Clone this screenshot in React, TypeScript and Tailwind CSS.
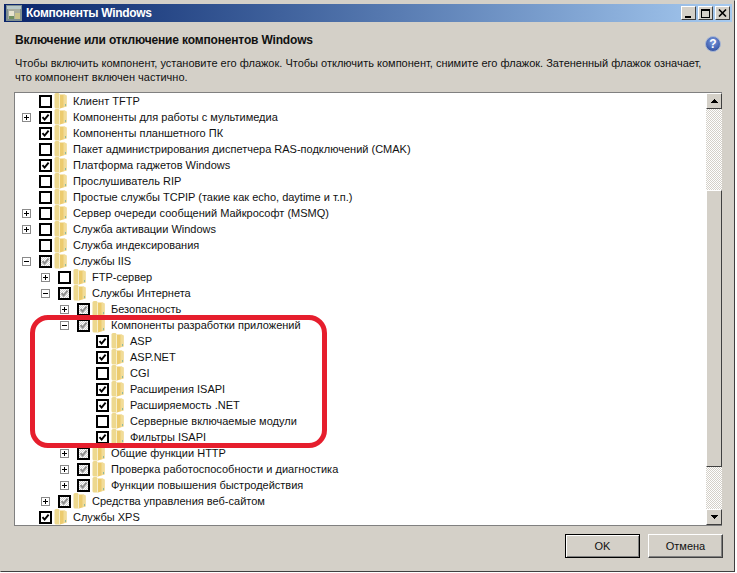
import React from "react";

type Row = {
  label: string;
  level: number;
  expander?: "plus" | "minus";
  state: "off" | "on" | "partial";
};

const rows: Row[] = [
  { label: "Клиент TFTP", level: 0, state: "off" },
  { label: "Компоненты для работы с мультимедиа", level: 0, expander: "plus", state: "on" },
  { label: "Компоненты планшетного ПК", level: 0, state: "on" },
  { label: "Пакет администрирования диспетчера RAS-подключений (CMAK)", level: 0, state: "off" },
  { label: "Платформа гаджетов Windows", level: 0, state: "on" },
  { label: "Прослушиватель RIP", level: 0, state: "off" },
  { label: "Простые службы TCPIP (такие как echo, daytime и т.п.)", level: 0, state: "off" },
  { label: "Сервер очереди сообщений Майкрософт (MSMQ)", level: 0, expander: "plus", state: "off" },
  { label: "Служба активации Windows", level: 0, expander: "plus", state: "off" },
  { label: "Служба индексирования", level: 0, state: "off" },
  { label: "Службы IIS", level: 0, expander: "minus", state: "partial" },
  { label: "FTP-сервер", level: 1, expander: "plus", state: "off" },
  { label: "Службы Интернета", level: 1, expander: "minus", state: "partial" },
  { label: "Безопасность", level: 2, expander: "plus", state: "partial" },
  { label: "Компоненты разработки приложений", level: 2, expander: "minus", state: "partial" },
  { label: "ASP", level: 3, state: "on" },
  { label: "ASP.NET", level: 3, state: "on" },
  { label: "CGI", level: 3, state: "off" },
  { label: "Расширения ISAPI", level: 3, state: "on" },
  { label: "Расширяемость .NET", level: 3, state: "on" },
  { label: "Серверные включаемые модули", level: 3, state: "off" },
  { label: "Фильтры ISAPI", level: 3, state: "on" },
  { label: "Общие функции HTTP", level: 2, expander: "plus", state: "partial" },
  { label: "Проверка работоспособности и диагностика", level: 2, expander: "plus", state: "partial" },
  { label: "Функции повышения быстродействия", level: 2, expander: "plus", state: "partial" },
  { label: "Средства управления веб-сайтом", level: 1, expander: "plus", state: "partial" },
  { label: "Службы XPS", level: 0, state: "on" },
];

function Expander({ kind }: { kind?: "plus" | "minus" }) {
  if (!kind) return <span className="w-[9px] h-[9px]" />;
  return (
    <svg width="9" height="9" viewBox="0 0 9 9" shapeRendering="crispEdges">
      <rect x="0.5" y="0.5" width="8" height="8" fill="#fff" stroke="#8a8a8a" />
      <path d="M2 4.5h5" stroke="#000" />
      {kind === "plus" && <path d="M4.5 2v5" stroke="#000" />}
    </svg>
  );
}

function Checkbox({ state }: { state: Row["state"] }) {
  const color = state === "partial" ? "#8c8c8c" : "#000";
  return (
    <span
      className={
        state === "partial"
          ? "flex w-[13px] h-[13px] border-2 border-black bg-[repeating-conic-gradient(#d0d0d0_0_25%,#fff_0_50%)] bg-[length:2px_2px]"
          : "flex w-[13px] h-[13px] border-2 border-black bg-white"
      }
    >
      {state !== "off" && (
        <svg width="9" height="9" viewBox="0 0 9 9">
          <path d="M1.5 4.2 3.6 6.6 7.6 1.6" fill="none" stroke={color} strokeWidth="1.9" />
        </svg>
      )}
    </span>
  );
}

function Folder() {
  return (
    <svg width="14" height="16" viewBox="0 0 14 16">
      <path d="M0.5 1.5Q0.5 0 2 0H4.5L6 1.5V15.5H2Q0.5 15.5 0.5 14z" fill="#edd88e" />
      <path d="M6 1.5H11L12.5 3V13.5L6 15.5z" fill="#eccb6e" />
      <path d="M9.5 2h3v11.3l-3 1z" fill="#f1dc98" />
      <path d="M5.5 1.5V15.5" stroke="#f7eec8" />
      <path d="M11.5 11v2" stroke="#8fb8a0" />
    </svg>
  );
}

function TreeRow({ row }: { row: Row }) {
  return (
    <div className="flex items-center h-4 whitespace-nowrap" style={{ paddingLeft: row.level * 19 }}>
      <span className="flex items-center justify-center w-[9px] ml-[7px]">
        <Expander kind={row.expander} />
      </span>
      <span className="ml-[8px]">
        <Checkbox state={row.state} />
      </span>
      <span className="ml-[2px] flex">
        <Folder />
      </span>
      <span className="ml-[5px] text-[11px] text-[#111]">{row.label}</span>
    </div>
  );
}

function CaptionButton({ children }: { children: React.ReactNode }) {
  return (
    <span className="flex items-center justify-center w-[15px] h-[14px] bg-[#d4d0c8] border border-t-white border-l-white border-r-[#404040] border-b-[#404040]">
      {children}
    </span>
  );
}

function ScrollArrow({ up }: { up?: boolean }) {
  return (
    <span className="flex items-center justify-center w-4 h-4 shrink-0 bg-[#d4d0c8] border border-t-white border-l-white border-r-[#404040] border-b-[#404040]">
      <svg width="7" height="4" viewBox="0 0 7 4" shapeRendering="crispEdges">
        <path d={up ? "M3.5 0 7 4H0z" : "M0 0h7L3.5 4z"} fill="#000" />
      </svg>
    </span>
  );
}

export default function App() {
  return (
    <div className="w-[735px] h-[572px] overflow-hidden bg-[#d4d0c8] border border-b-[#404040] border-r-[#404040] border-t-[#d4d0c8] border-l-[#d4d0c8] pl-[3px] pr-[2px] pt-[3px] font-['Liberation_Sans',sans-serif] text-black">
      <div className="flex items-center justify-between h-[18px] pl-[2px] pr-[2px] bg-gradient-to-r from-[#0a246a] to-[#a6caf0]">
        <div className="flex items-center gap-[2px]">
          <svg width="16" height="16" viewBox="0 0 16 16" shapeRendering="crispEdges">
            <rect x="0" y="0" width="16" height="16" fill="#7f8f90" />
            <rect x="1" y="1" width="14" height="3" fill="#b8c8c8" />
            <rect x="2" y="4" width="12" height="10" fill="#a9ada0" />
            <rect x="3" y="6" width="5" height="5" fill="#e8e4d0" />
            <rect x="9" y="8" width="5" height="6" fill="#c9c28a" />
            <rect x="3" y="11" width="5" height="3" fill="#6f8f5f" />
          </svg>
          <span className="ml-[2px] text-[12px] font-bold text-white tracking-[-0.3px]">Компоненты Windows</span>
        </div>
        <div className="flex items-center gap-[2px]">
          <CaptionButton>
            <span className="w-[6px] h-[2px] bg-black mt-[7px] mr-[2px]" />
          </CaptionButton>
          <CaptionButton>
            <span className="w-[9px] h-[9px] border border-t-2 border-black" />
          </CaptionButton>
          <CaptionButton>
            <svg width="9" height="8" viewBox="0 0 9 8">
              <path d="M1 0.5 8 7.5M8 0.5 1 7.5" stroke="#000" strokeWidth="1.6" />
            </svg>
          </CaptionButton>
        </div>
      </div>

      <div className="flex justify-between items-start pl-[11px] pr-[11px] pt-[11px] h-[22px] box-content">
        <h1 className="text-[12px] font-bold text-[#111] leading-[15px] tracking-[-0.16px]">
          Включение или отключение компонентов Windows
        </h1>
        <svg width="16" height="16" viewBox="0 0 16 16" className="mt-[3px]">
          <defs>
            <radialGradient id="help" cx="0.5" cy="0.35" r="0.7">
              <stop offset="0" stopColor="#7d9be0" />
              <stop offset="1" stopColor="#2a4a9c" />
            </radialGradient>
          </defs>
          <circle cx="8" cy="8" r="7.5" fill="url(#help)" stroke="#a9b8d4" />
          <text x="8" y="12" textAnchor="middle" fontSize="12" fontWeight="700" fill="#fff" fontFamily="Liberation Sans">
            ?
          </text>
        </svg>
      </div>

      <p className="mt-[1px] ml-[11px] w-[690px] text-[11px] leading-[14px] text-[#111]">
        Чтобы включить компонент, установите его флажок. Чтобы отключить компонент, снимите его флажок. Затененный флажок означает, что компонент включен частично.
      </p>

      <div className="relative flex mt-[8px] ml-[10px] w-[708px] h-[434px] bg-white border border-r-0 border-t-[#808080] border-l-[#808080] border-b-[#808080]">
        <div className="flex-1 overflow-hidden">
          {rows.map((row) => (
            <TreeRow key={row.label} row={row} />
          ))}
        </div>
        <div className="flex flex-col w-4 shrink-0">
          <ScrollArrow up />
          <div className="h-[81px] bg-[repeating-conic-gradient(#d4d0c8_0_25%,#fff_0_50%)] bg-[length:2px_2px]" />
          <div className="h-[277px] bg-[#d4d0c8] border border-t-white border-l-white border-r-[#404040] border-b-[#404040]" />
          <div className="flex-1 bg-[repeating-conic-gradient(#d4d0c8_0_25%,#fff_0_50%)] bg-[length:2px_2px]" />
          <ScrollArrow />
        </div>
        <div className="absolute left-[15px] top-[222px] w-[297px] h-[133px] border-[5px] border-[#e61e2d] rounded-[18px]" />
      </div>

      <div className="flex justify-end gap-[8px] mt-[8px] mr-[9px]">
        <button className="w-[75px] h-[24px] bg-[#d4d0c8] border border-black shadow-[inset_1px_1px_0_#fff,inset_-1px_-1px_0_#808080] text-[11px] text-[#111]">
          OK
        </button>
        <button className="w-[75px] h-[24px] bg-[#d4d0c8] border border-t-white border-l-white border-r-[#404040] border-b-[#404040] shadow-[inset_-1px_-1px_0_#808080] text-[11px] text-[#111]">
          Отмена
        </button>
      </div>
    </div>
  );
}
